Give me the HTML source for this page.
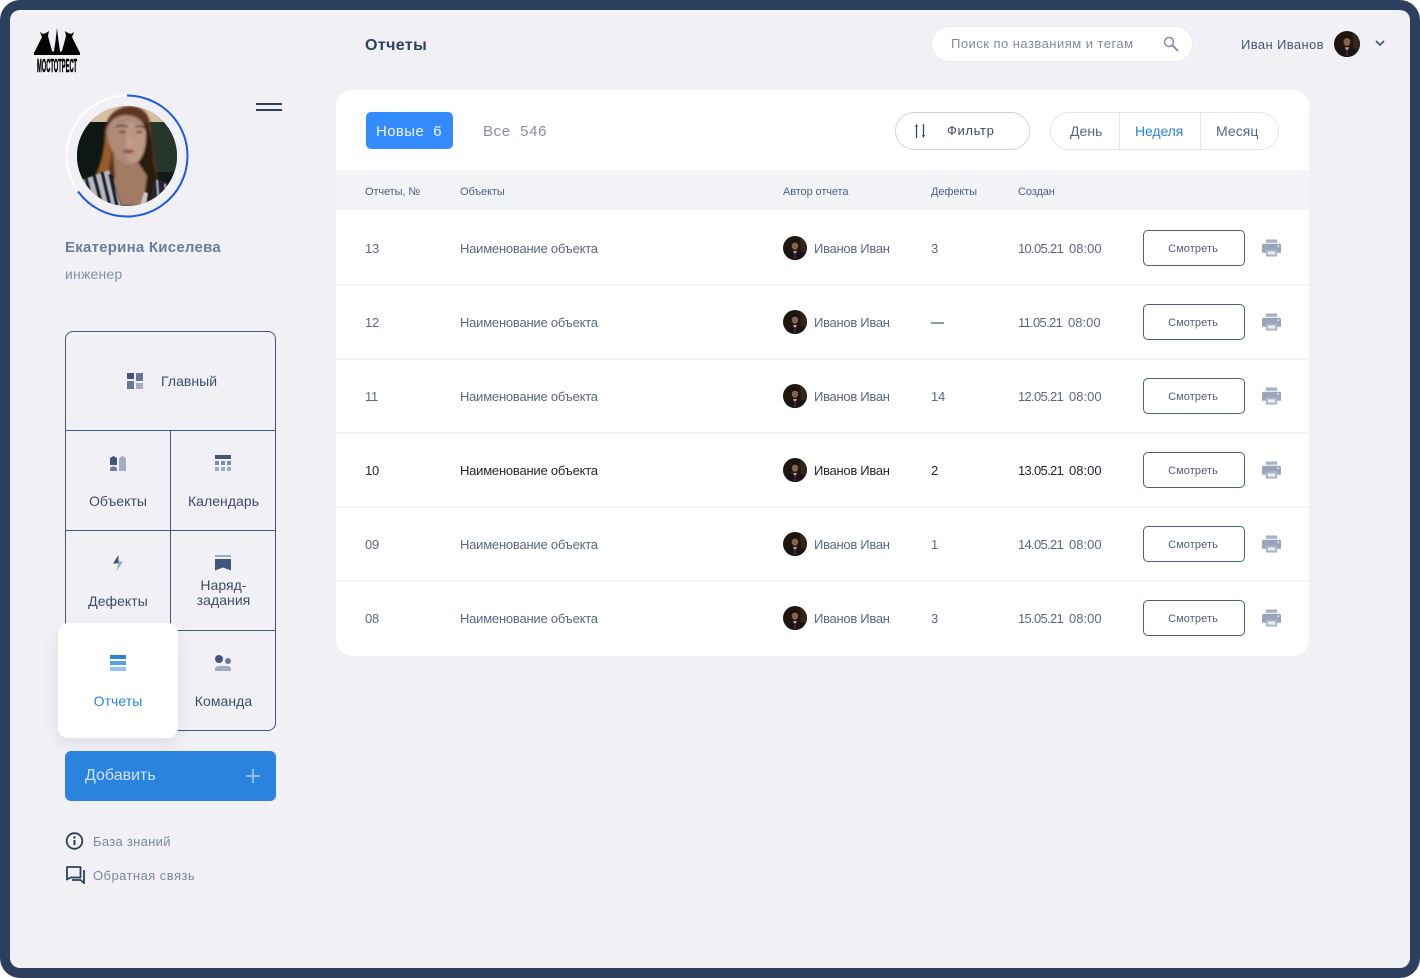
<!DOCTYPE html>
<html lang="ru"><head><meta charset="utf-8"><title>Отчеты</title>
<style>
*{box-sizing:border-box}
html,body{margin:0;padding:0;width:1420px;height:978px;overflow:hidden;background:#fff}
body{font-family:"Liberation Sans",sans-serif;position:relative;color:#4a5a7e}
.frame{position:absolute;left:0;top:0;width:1420px;height:978px;background:#2d3f5e;border-radius:20px}
.in{position:absolute;left:10px;top:10px;width:1400px;height:958px;background:#f0f0f5;border-radius:10px}
.a{position:absolute;white-space:nowrap;transform:translateY(1px)}
.card{position:absolute;left:336px;top:90px;width:973px;height:566px;background:#fff;border-radius:16px;overflow:hidden}
.th{position:absolute;left:336px;top:170px;width:973px;height:40px;background:#f3f4f8}
.sep{position:absolute;left:336px;width:973px;height:2px;background:#f3f4f8}
.h{font-size:11px;line-height:14px;top:184px;color:#4f5d7c;letter-spacing:-.1px}
.c{font-size:13px;line-height:16px;color:#5a6784;letter-spacing:-.22px}
.n{letter-spacing:-.28px}
.d{letter-spacing:-.7px}
.d span{letter-spacing:0;margin-left:6px}
.k{color:#1e2535}
.b{position:absolute;left:1143px;width:102px;height:36px;border:1px solid #4b5f86;border-radius:5px;background:#fff;font-size:11px;line-height:36px;text-align:center;color:#4f5d7c;padding-right:2px;letter-spacing:.1px}
.a.t{font-size:14px;line-height:16px;text-align:center;color:#3d4b6b;letter-spacing:.05px;transform:none}
svg{position:absolute;display:block}
.l{position:absolute;background:#41557e}
</style></head><body>
<svg width="0" height="0" style="left:0;top:0"><defs>
<clipPath id="ac"><circle cx="12" cy="12" r="12"/></clipPath>
<symbol id="av" viewBox="0 0 24 24"><g clip-path="url(#ac)"><rect width="24" height="24" fill="#21160f"/><path d="M17 0h7v16h-6z" fill="#35261c"/><path d="M3 24v-3q1-4 5-5l4-1 4 1q5 1 5 5v3z" fill="#15141a"/><path d="M10 15l2 4.500 2-4.500z" fill="#b3a59b"/><path d="M11.400 17h1.200l.6 6h-2.400z" fill="#5b1c22"/><ellipse cx="12" cy="9.700" rx="3.200" ry="4.200" fill="#83634f"/><path d="M8.700 9q0-5 3.300-5t3.300 5q-1-2.400-3.300-2.400T8.700 9z" fill="#17100d"/></g></symbol>
<symbol id="pr" viewBox="0 0 20 18"><path d="M4 0h12v3.500H4z" fill="#a9b2c5"/><path d="M2 4.500h16a2 2 0 0 1 2 2V14h-4v-3H4v3H0V6.500a2 2 0 0 1 2-2z" fill="#99a4bb"/><path d="M4 11h12v7H4z" fill="#a9b2c5"/><path d="M6 12.500h8v3.500H6z" fill="#e9ebf1"/><circle cx="17" cy="7" r="1" fill="#e9ebf1"/></symbol>
<filter id="bl"><feGaussianBlur stdDeviation="1"/></filter>
<filter id="bl2"><feGaussianBlur stdDeviation=".5"/></filter>
<clipPath id="pc"><circle cx="50" cy="50" r="50"/></clipPath>
</defs></svg>

<div class="frame"></div><div class="in"></div>

<!-- logo -->
<svg style="left:33px;top:27px" width="48" height="48" viewBox="0 0 48 48">
<path d="M1 26L9 10 7 5l3 2 3-1 3-2-1 5 4 15 2 1v3H1z" fill="#050505"/>
<path d="M47 26L39 10l2-5-3 2-3-1-3-2 1 5-4 15-2 1v3h20z" fill="#050505"/>
<path d="M24 1l1.500 13 1.500 10v3h-6v-3l1.500-10z" fill="#050505"/>
<path d="M1 25h46l-1 3H2z" fill="#050505"/>
<text x="4" y="45" font-size="18" font-weight="700" fill="#050505" stroke="#050505" stroke-width=".6" textLength="40" lengthAdjust="spacingAndGlyphs" font-family="'Liberation Sans',sans-serif">МОСТОТРЕСТ</text>
</svg>

<!-- profile -->
<svg style="left:64px;top:93px" width="126" height="126" viewBox="0 0 126 126">
<circle cx="63" cy="63" r="60.500" fill="none" stroke="#fff" stroke-width="2"/>
<path d="M63 2.500A60.500 60.500 0 1 1 14 98.500" fill="none" stroke="#1f56e6" stroke-width="2"/>
</svg>
<svg style="left:77px;top:106px" width="100" height="100" viewBox="0 0 100 100">
<g clip-path="url(#pc)">
<rect width="100" height="100" fill="#111a15"/>
<path d="M0 0h100v16H0z" fill="#d6c0a0"/>
<path d="M70 16h30v50H70z" fill="#27362b"/>
<path d="M0 16h30v60H0z" fill="#0f1712"/>
<g filter="url(#bl)">
<path d="M27 30Q28 3 52 0q20 0 22 22l4 33q4 20 6 40l-29 5 3-30H35l-18 6Q30 55 27 30z" fill="#5f3520"/>
<path d="M28 30Q26 55 18 70l13-4 5-26z" fill="#9a5c2c"/>
<path d="M68 15q8 15 8 40l9 37-20 8-9-40z" fill="#2c1b10"/>
<path d="M36 48l2 20-2 8 8 24h22l4-30-10-15z" fill="#a37a64"/>
<path d="M29 26Q33 10 48 9q18 0 21 17 1 19-7 29-9 7-18 1-11-10-15-30z" fill="#b08a78"/>
<path d="M48 16q15-2 21 10 0 19-8 29-6 3-11-1z" fill="#bd9785"/>
<path d="M39 21q6-3 12 0M58 21q5-2 10 1" fill="none" stroke="#3e271c" stroke-width="1.500"/>
<path d="M42 26h7M59 26h6" stroke="#4a3a32" stroke-width="2"/>
<path d="M45 45q7-3 13 0-6 5-13 0z" fill="#8d4f49"/>
<path d="M51 29l-1 9h5z" fill="#c8a18e"/>
</g>
<g filter="url(#bl2)">
<path d="M0 100L5 74l27-10 12 36z" fill="#b9b7bc"/>
<path d="M9 72l7 28M17 69l8 31M25 66l8 34M33 68l7 32" stroke="#152033" stroke-width="3.600"/>
<path d="M72 100l6-28 14 6 8 22z" fill="#25273a"/>
<path d="M80 74l2 26M88 78l3 22" stroke="#bdbbc0" stroke-width="1.600"/>
<path d="M63 100l4-14 4 1-2 13z" fill="#c9c6cb"/>
</g>
</g></svg>
<svg style="left:256px;top:103px" width="26" height="9"><path d="M0 1h26M0 7h26" stroke="#2d3f5e" stroke-width="2"/></svg>
<div class="a" style="left:65px;top:238px;font-size:15px;line-height:18px;font-weight:700;color:#6c7a9c;letter-spacing:.24px">Екатерина Киселева</div>
<div class="a" style="left:65px;top:265px;font-size:14px;line-height:16px;color:#8490ac;letter-spacing:.2px">инженер</div>

<!-- nav grid -->
<div style="position:absolute;left:65px;top:331px;width:211px;height:400px;border:1px solid #41557e;border-radius:8px"></div>
<div class="l" style="left:65px;top:430px;width:211px;height:1px"></div>
<div class="l" style="left:65px;top:530px;width:211px;height:1px"></div>
<div class="l" style="left:65px;top:630px;width:211px;height:1px"></div>
<div class="l" style="left:170px;top:431px;width:1px;height:300px"></div>

<svg style="left:127px;top:373px" width="16" height="16"><rect width="7" height="6" fill="#41557e"/><rect x="9" width="7" height="8" fill="#69789a"/><rect y="8" width="7" height="8" fill="#69789a"/><rect x="9" y="10" width="7" height="6" fill="#a3adc2"/></svg>
<div class="a t" style="left:161px;top:373px">Главный</div>

<svg style="left:110px;top:455px" width="17" height="17"><path d="M0 3l3.500-2L7 3v7H0z" fill="#41557e"/><path d="M0 16v-2q0-2.500 3.500-2.500T7 14v2z" fill="#6d7c9c"/><path d="M9 3.500l3.500-3 3.500 3V16H9z" fill="#a3adc2"/></svg>
<div class="a t" style="left:66px;top:493px;width:104px">Объекты</div>

<svg style="left:215px;top:455px" width="16" height="16"><rect width="16" height="4" fill="#41557e"/><g fill="#7d8aa8"><rect y="6" width="4" height="4"/><rect x="6" y="6" width="4" height="4"/><rect x="12" y="6" width="4" height="4"/></g><g fill="#a3adc2"><rect y="12" width="4" height="4"/><rect x="6" y="12" width="4" height="4"/><rect x="12" y="12" width="4" height="4"/></g></svg>
<div class="a t" style="left:171px;top:493px;width:105px">Календарь</div>

<svg style="left:113px;top:555px" width="10" height="17"><path d="M5.500 0L0 8.500h5.500z" fill="#41557e"/><path d="M5.500 5.500L10 7 3.500 16 5 9z" fill="#a3adc2"/></svg>
<div class="a t" style="left:66px;top:593px;width:104px">Дефекты</div>

<svg style="left:215px;top:555px" width="16" height="16"><rect width="16" height="2" fill="#a3adc2"/><path d="M0 4h16v11.500l-8-3-8 3z" fill="#41557e"/></svg>
<div class="a t" style="left:171px;top:578px;width:105px;line-height:15px">Наряд-<br>задания</div>

<div style="position:absolute;left:58px;top:623px;width:120px;height:115px;background:#fff;border-radius:10px;box-shadow:0 6px 14px rgba(60,70,100,.10)"></div>
<svg style="left:110px;top:655px" width="16" height="16"><rect width="16" height="4" fill="#2a84de"/><rect y="6" width="16" height="4" fill="#5aa0e6"/><rect y="12" width="16" height="4" fill="#96c2ef"/></svg>
<div class="a t" style="left:58px;top:693px;width:120px;color:#2a84de">Отчеты</div>

<svg style="left:215px;top:655px" width="17" height="16"><circle cx="4" cy="4" r="4" fill="#41557e"/><circle cx="13" cy="6" r="3" fill="#69789a"/><path d="M0 16v-1.500Q0 11 4 11h8.500q3.500 0 3.500 3.500V16z" fill="#a3adc2"/></svg>
<div class="a t" style="left:171px;top:693px;width:105px">Команда</div>

<div style="position:absolute;left:65px;top:751px;width:211px;height:50px;background:#2a84de;border-radius:6px"></div>
<div class="a" style="left:85px;top:766px;font-size:16px;line-height:18px;color:#cfe2f6">Добавить</div>
<svg style="left:246px;top:769px" width="14" height="14"><path d="M7 0v14M0 7h14" stroke="#a9cff3" stroke-width="1.500"/></svg>

<svg style="left:65px;top:832px" width="19" height="18" viewBox="0 0 19 18"><circle cx="9.500" cy="9" r="7.800" fill="none" stroke="#2d3f5e" stroke-width="1.800"/><path d="M9.500 8v5" stroke="#2d3f5e" stroke-width="2"/><circle cx="9.500" cy="5.500" r="1.200" fill="#2d3f5e"/></svg>
<div class="a" style="left:93px;top:833px;font-size:13px;line-height:16px;color:#7b87a3;letter-spacing:.3px">База знаний</div>
<svg style="left:66px;top:866px" width="19" height="18" viewBox="0 0 19 18"><path d="M1 1h13.500v10.500H4.500L1 13.500z" fill="none" stroke="#2d3f5e" stroke-width="1.800" stroke-linejoin="round"/><path d="M17 5h1v12l-3.500-3H6" fill="none" stroke="#2d3f5e" stroke-width="1.800"/></svg>
<div class="a" style="left:93px;top:867px;font-size:13px;line-height:16px;color:#7b87a3;letter-spacing:.45px">Обратная связь</div>

<!-- top bar -->
<div class="a" style="left:365px;top:35px;font-size:16px;line-height:19px;font-weight:700;color:#2f3f5e;letter-spacing:.4px">Отчеты</div>
<div style="position:absolute;left:931px;top:26px;width:262px;height:36px;background:#fff;border:1px solid #e9ebf2;border-radius:18px"></div>
<div class="a" style="left:951px;top:35px;font-size:13px;line-height:16px;color:#7f8aa5;letter-spacing:.47px">Поиск по названиям и тегам</div>
<svg style="left:1163px;top:36px" width="16" height="16" viewBox="0 0 16 16"><circle cx="6" cy="6" r="4.500" fill="none" stroke="#7f8aa5" stroke-width="1.500"/><path d="M9.500 9.500L15 15" stroke="#7f8aa5" stroke-width="1.800"/></svg>
<div class="a" style="left:1241px;top:36px;font-size:13px;line-height:16px;color:#47567a;letter-spacing:.38px">Иван Иванов</div>
<svg style="left:1334px;top:31px" width="26" height="26"><use href="#av" width="26" height="26"/></svg>
<svg style="left:1375px;top:40px" width="10" height="7"><path d="M1 1l4 4 4-4" fill="none" stroke="#3c4e72" stroke-width="1.600"/></svg>

<!-- card -->
<div class="card"></div>
<div style="position:absolute;left:366px;top:112px;width:87px;height:37px;background:#348bff;border-radius:5px"></div>
<div class="a" style="left:376px;top:122px;font-size:15px;line-height:18px;color:#eef5ff;letter-spacing:.38px">Новые&nbsp; 6</div>
<div class="a" style="left:483px;top:122px;font-size:15px;line-height:18px;color:#858fa8;letter-spacing:.6px">Все&nbsp; 546</div>

<div style="position:absolute;left:895px;top:112px;width:135px;height:38px;background:#fff;border:1px solid #cfd4e0;border-radius:19px"></div>
<svg style="left:914px;top:123px" width="12" height="16"><path d="M2.500 2v13M9.500 1v13" stroke="#2d3f5e" stroke-width="1.200"/><path d="M1 3.500l1.500-2.500L4 3.500zM8 12l1.500 3L11 12z" fill="#2d3f5e"/></svg>
<div class="a" style="left:947px;top:122px;font-size:13px;line-height:16px;color:#3d4b6b;letter-spacing:.63px">Фильтр</div>

<div style="position:absolute;left:1050px;top:112px;width:229px;height:38px;background:#fff;border:1px solid #e2e6f0;border-radius:19px"></div>
<div class="l" style="left:1119px;top:112px;width:1px;height:38px;background:#e2e6f0"></div>
<div class="l" style="left:1200px;top:112px;width:1px;height:38px;background:#e2e6f0"></div>
<div class="a" style="left:1070px;top:122px;font-size:14px;line-height:17px;color:#5a6784;letter-spacing:.05px">День</div>
<div class="a" style="left:1135px;top:122px;font-size:14px;line-height:17px;color:#2a84de;letter-spacing:-.1px">Неделя</div>
<div class="a" style="left:1216px;top:122px;font-size:14px;line-height:17px;color:#56638a;letter-spacing:.05px">Месяц</div>

<div class="th"></div>
<div class="a h" style="left:365px">Отчеты, №</div>
<div class="a h" style="left:460px">Объекты</div>
<div class="a h" style="left:783px">Автор отчета</div>
<div class="a h" style="left:931px">Дефекты</div>
<div class="a h" style="left:1018px">Создан</div>

<div class="sep" style="top:284px"></div><div class="sep" style="top:358px"></div><div class="sep" style="top:432px"></div><div class="sep" style="top:506px"></div><div class="sep" style="top:580px"></div>

<!-- row 13 -->
<div class="a c" style="left:365px;top:240px">13</div>
<div class="a c" style="left:460px;top:240px">Наименование объекта</div>
<svg style="left:783px;top:236px" width="24" height="24"><use href="#av" width="24" height="24"/></svg>
<div class="a c n" style="left:814px;top:240px">Иванов Иван</div>
<div class="a c" style="left:931px;top:240px">3</div>
<div class="a c d" style="left:1018px;top:240px">10.05.21<span>08:00</span></div>
<div class="b" style="top:230px">Смотреть</div>
<svg style="left:1262px;top:239px" width="19" height="18"><use href="#pr" width="19" height="18"/></svg>

<!-- row 12 -->
<div class="a c" style="left:365px;top:314px">12</div>
<div class="a c" style="left:460px;top:314px">Наименование объекта</div>
<svg style="left:783px;top:310px" width="24" height="24"><use href="#av" width="24" height="24"/></svg>
<div class="a c n" style="left:814px;top:314px">Иванов Иван</div>
<div style="position:absolute;left:931px;top:322px;width:13px;height:1.500px;background:#8c97b0"></div>
<div class="a c d" style="left:1018px;top:314px">11.05.21<span>08:00</span></div>
<div class="b" style="top:304px">Смотреть</div>
<svg style="left:1262px;top:313px" width="19" height="18"><use href="#pr" width="19" height="18"/></svg>

<!-- row 11 -->
<div class="a c" style="left:365px;top:388px">11</div>
<div class="a c" style="left:460px;top:388px">Наименование объекта</div>
<svg style="left:783px;top:384px" width="24" height="24"><use href="#av" width="24" height="24"/></svg>
<div class="a c n" style="left:814px;top:388px">Иванов Иван</div>
<div class="a c" style="left:931px;top:388px">14</div>
<div class="a c d" style="left:1018px;top:388px">12.05.21<span>08:00</span></div>
<div class="b" style="top:378px">Смотреть</div>
<svg style="left:1262px;top:387px" width="19" height="18"><use href="#pr" width="19" height="18"/></svg>

<!-- row 10 -->
<div class="a c k" style="left:365px;top:462px">10</div>
<div class="a c k" style="left:460px;top:462px">Наименование объекта</div>
<svg style="left:783px;top:458px" width="24" height="24"><use href="#av" width="24" height="24"/></svg>
<div class="a c k n" style="left:814px;top:462px">Иванов Иван</div>
<div class="a c k" style="left:931px;top:462px">2</div>
<div class="a c k d" style="left:1018px;top:462px">13.05.21<span>08:00</span></div>
<div class="b" style="top:452px">Смотреть</div>
<svg style="left:1262px;top:461px" width="19" height="18"><use href="#pr" width="19" height="18"/></svg>

<!-- row 09 -->
<div class="a c" style="left:365px;top:536px">09</div>
<div class="a c" style="left:460px;top:536px">Наименование объекта</div>
<svg style="left:783px;top:532px" width="24" height="24"><use href="#av" width="24" height="24"/></svg>
<div class="a c n" style="left:814px;top:536px">Иванов Иван</div>
<div class="a c" style="left:931px;top:536px">1</div>
<div class="a c d" style="left:1018px;top:536px">14.05.21<span>08:00</span></div>
<div class="b" style="top:526px">Смотреть</div>
<svg style="left:1262px;top:535px" width="19" height="18"><use href="#pr" width="19" height="18"/></svg>

<!-- row 08 -->
<div class="a c" style="left:365px;top:610px">08</div>
<div class="a c" style="left:460px;top:610px">Наименование объекта</div>
<svg style="left:783px;top:606px" width="24" height="24"><use href="#av" width="24" height="24"/></svg>
<div class="a c n" style="left:814px;top:610px">Иванов Иван</div>
<div class="a c" style="left:931px;top:610px">3</div>
<div class="a c d" style="left:1018px;top:610px">15.05.21<span>08:00</span></div>
<div class="b" style="top:600px">Смотреть</div>
<svg style="left:1262px;top:609px" width="19" height="18"><use href="#pr" width="19" height="18"/></svg>
</body></html>
